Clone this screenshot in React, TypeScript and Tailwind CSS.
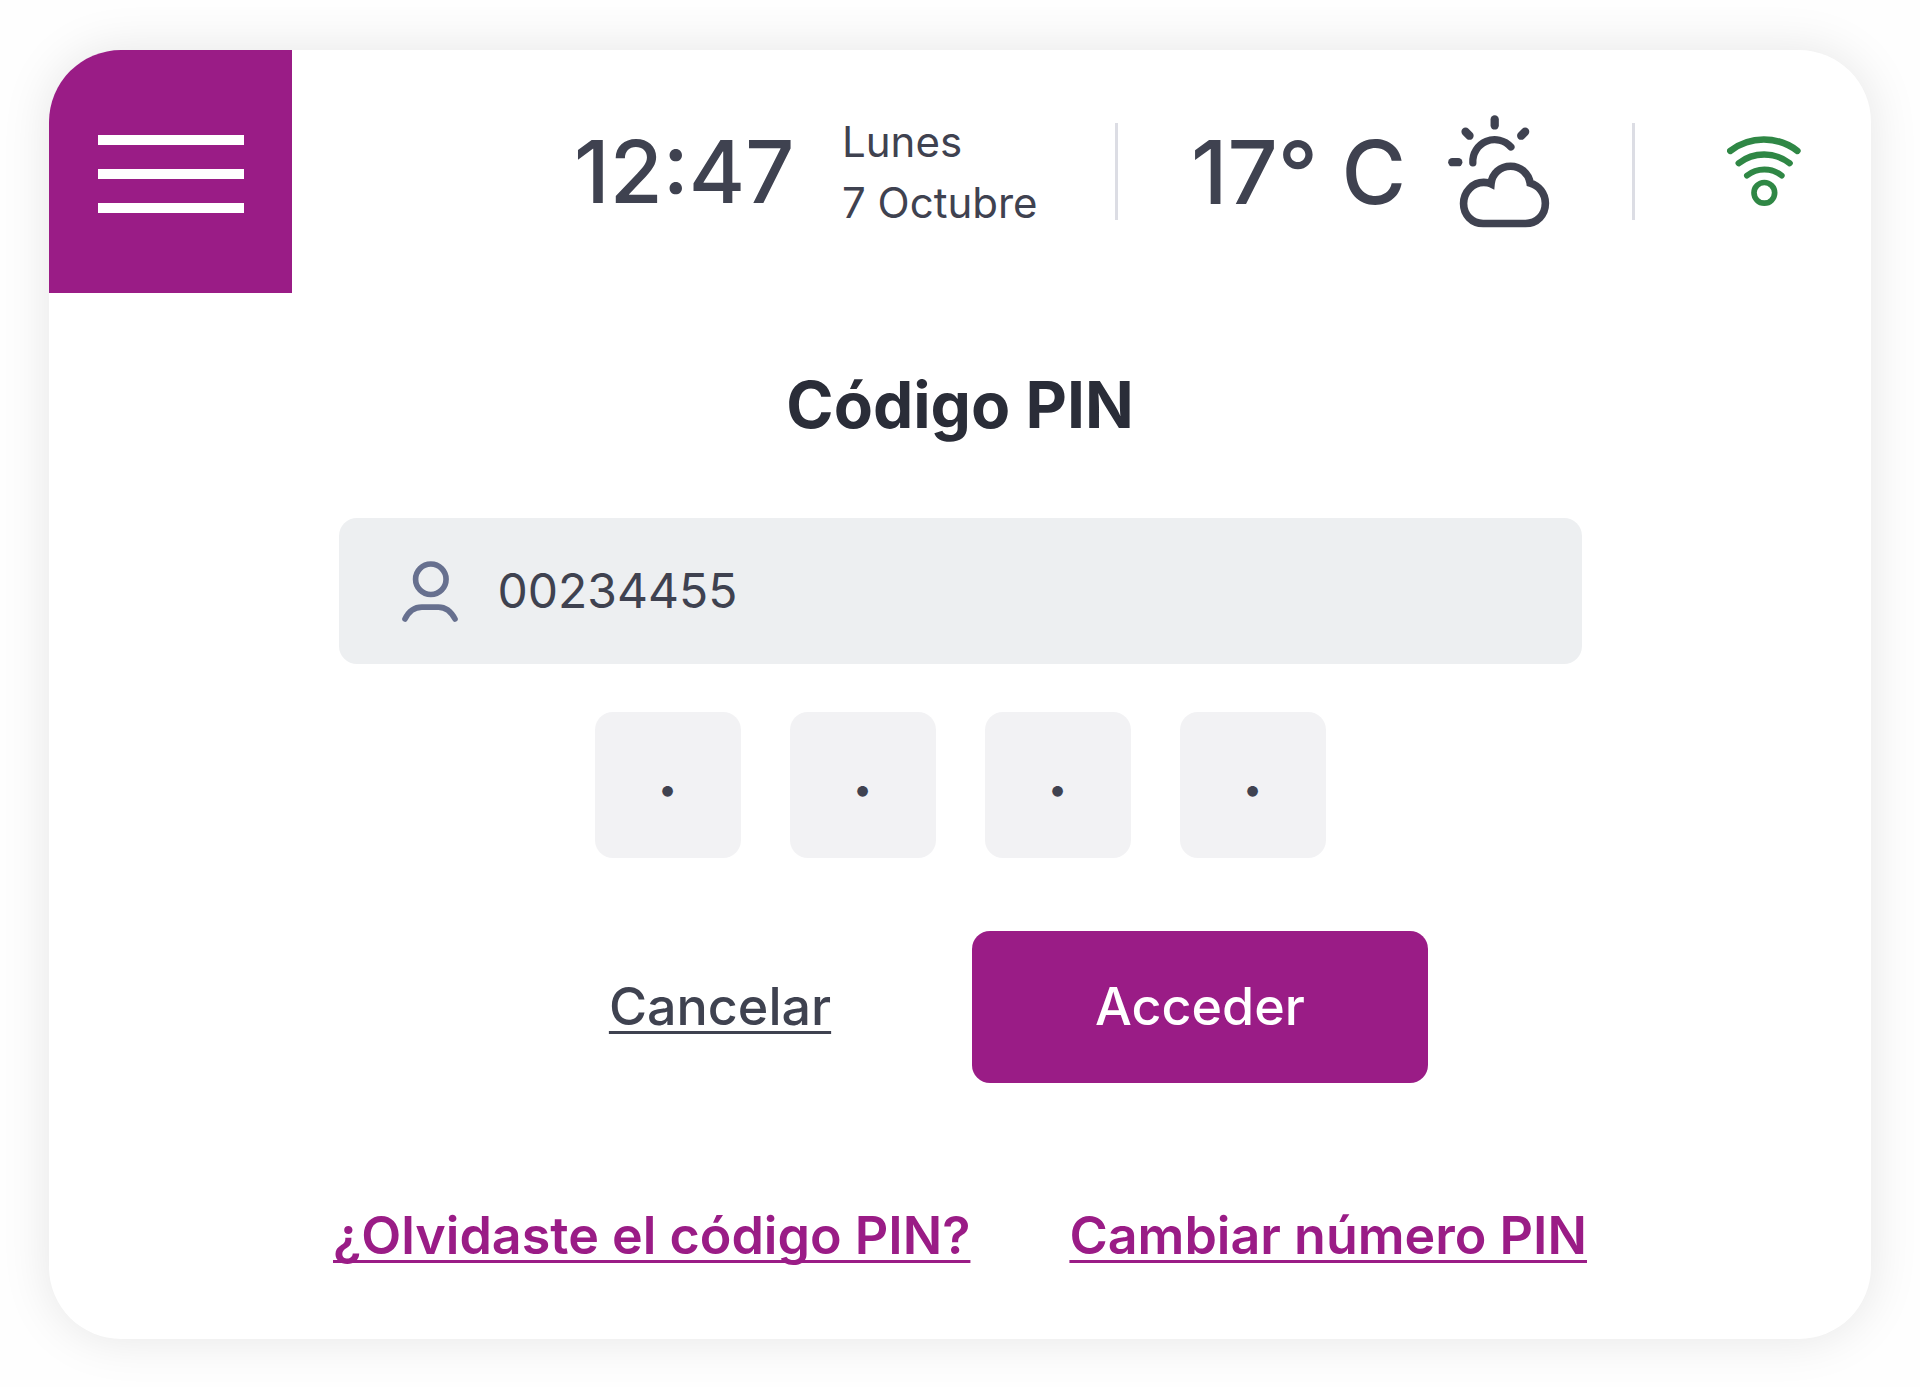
import { useState } from 'react'

const LINKS = [
  { label: '¿Olvidaste el código PIN?', href: '#olvidaste' },
  { label: 'Cambiar número PIN', href: '#cambiar' },
]

function WeatherIcon() {
  return (
    <svg viewBox="0 0 308 340" className="h-[113px] w-[102px]" fill="none" stroke="currentColor" aria-hidden="true">
      <g strokeLinecap="round" strokeWidth="25">
        <path d="M141 13V31" />
        <path d="M53 50L65 62" />
        <path d="M233 50L221 62" />
        <path d="M13 142H31" />
      </g>
      <path d="M75 144A66 66 0 0 1 190 96" strokeLinecap="round" strokeWidth="22" />
      <path
        d="M106 327C72 327 47 301 47 267C47 231 75 203 108 203C116 203 124 204 130 207C133 176 158 154 189 154C219 154 244 176 248 205C274 212 294 236 294 266C294 301 269 327 234 327Z"
        strokeWidth="23"
      />
    </svg>
  )
}

function WifiIcon() {
  return (
    <svg viewBox="0 0 222 212" className="h-[71px] w-[74px] text-[#2f8745]" fill="none" stroke="currentColor" strokeLinecap="round" aria-hidden="true">
      <path d="M10 44A166 166 0 0 1 211 44" strokeWidth="20" />
      <path d="M35 81A126 126 0 0 1 188 81" strokeWidth="19" />
      <path d="M60 118A83 83 0 0 1 164 118" strokeWidth="18" />
      <circle cx="112" cy="170" r="31" strokeWidth="17" />
    </svg>
  )
}

function UserIcon() {
  return (
    <svg viewBox="0 0 169 184" className="h-[61px] w-14 text-[#67708f]" fill="none" stroke="currentColor" strokeLinecap="round" strokeWidth="17" aria-hidden="true">
      <circle cx="87" cy="55" r="46" />
      <path d="M9 175C20 152 36 139 60 139H110C132 139 148 152 160 175" />
    </svg>
  )
}

function Divider() {
  return <div className="h-[97px] w-[3px] bg-[#dcdde4]" />
}

function Header() {
  return (
    <header className="flex items-center justify-between pr-[70px] text-[#3f4250]">
      <button
        aria-label="Menú"
        className="flex h-[243px] w-[243px] flex-col items-center justify-center gap-6 rounded-tl-[72px] bg-[#9a1c86] pt-1"
      >
        <span className="h-[10px] w-[146px] bg-white" />
        <span className="h-[10px] w-[146px] bg-white" />
        <span className="h-[10px] w-[146px] bg-white" />
      </button>

      <div className="flex items-center">
        <time className="w-[268px] text-[86px] leading-none font-medium whitespace-nowrap">12:47</time>
        <div className="w-[273px] text-[42px] leading-[61px] whitespace-nowrap">
          <p>Lunes</p>
          <p>7 Octubre</p>
        </div>
        <Divider />
        <p className="ml-[73px] w-[257px] text-[88px] leading-none font-medium whitespace-nowrap">17° C</p>
        <WeatherIcon />
        <div className="mr-[92px] ml-[82px]">
          <Divider />
        </div>
        <WifiIcon />
      </div>
    </header>
  )
}

export default function App() {
  const [usuario, setUsuario] = useState('00234455')
  const [pin, setPin] = useState(['1', '2', '3', '4'])

  function handleDigit(index: number, value: string) {
    setPin(pin.map((d, i) => (i === index ? value : d)))
  }

  return (
    <div className="min-h-screen bg-[#fefefe] px-[49px] pt-[50px] pb-12 font-['Inter',sans-serif]">
      <main className="rounded-[72px] bg-white pb-[73px] shadow-[0_0_50px_rgba(0,0,0,0.1)]">
        <Header />

        <form className="flex flex-col items-center" onSubmit={(e) => e.preventDefault()}>
          <h1 className="mt-[75px] text-[64px] leading-[74px] font-bold text-[#2a2d38]">Código PIN</h1>

          <label className="mt-[76px] flex h-[146px] w-full max-w-[1243px] items-center gap-10 rounded-[18px] bg-[#edeff1] px-[63px]">
            <UserIcon />
            <input
              aria-label="Usuario"
              value={usuario}
              onChange={(e) => setUsuario(e.target.value)}
              className="min-w-0 flex-1 bg-transparent text-[48px] leading-[60px] text-[#3f4250] outline-none"
            />
          </label>

          <div className="mt-12 flex gap-[49px]">
            {pin.map((digit, i) => (
              <input
                key={i}
                type="password"
                maxLength={1}
                aria-label={`Dígito ${i + 1}`}
                value={digit}
                onChange={(e) => handleDigit(i, e.target.value)}
                className="h-[146px] w-[146px] rounded-[18px] bg-[#f2f2f4] pt-[6px] text-center text-[34px] text-[#3f4250] outline-none"
              />
            ))}
          </div>

          <div className="mt-[73px] flex gap-6 text-[52px] leading-[60px]">
            <button
              type="button"
              className="h-[152px] w-[456px] font-medium text-[#3f4250] underline decoration-[3px] underline-offset-[6px] [text-decoration-skip-ink:none]"
            >
              Cancelar
            </button>
            <button type="submit" className="h-[152px] w-[456px] rounded-[18px] bg-[#9a1c86] font-medium text-white">
              Acceder
            </button>
          </div>
        </form>

        <nav className="mt-[123px] flex justify-center gap-[99px]">
          {LINKS.map((link) => (
            <a
              key={link.href}
              href={link.href}
              className="text-[52px] leading-[60px] font-semibold text-[#9a1c86] underline decoration-[3px] underline-offset-[6px] [text-decoration-skip-ink:none]"
            >
              {link.label}
            </a>
          ))}
        </nav>
      </main>
    </div>
  )
}
